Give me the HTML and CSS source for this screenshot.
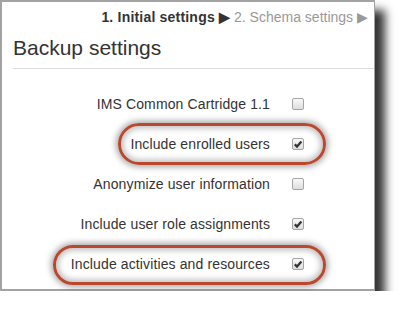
FILE: index.html
```html
<!DOCTYPE html>
<html lang="en">
<head>
    <meta charset="UTF-8">
    <meta name="viewport" content="width=device-width, initial-scale=1.0">
    <title>Backup settings</title>
    <link rel="stylesheet" href="styles.css">
</head>
<body>
    <div class="panel">
        <div class="steps">
            <span class="step-current">1. Initial settings &#9654;</span>
            <span class="step-next">2. Schema settings &#9654;</span>
        </div>
        <h2>Backup settings</h2>
        <hr>

        <div class="rows">
            <div class="row">
                <span class="label">IMS Common Cartridge 1.1</span>
                <span class="box"></span>
            </div>
            <div class="row mark-short">
                <span class="label">Include enrolled users</span>
                <span class="box checked"><svg viewBox="0 0 10 10"><path d="M1.8 5.4 L4 7.6 L8.4 2.6" /></svg></span>
            </div>
            <div class="row">
                <span class="label">Anonymize user information</span>
                <span class="box"></span>
            </div>
            <div class="row">
                <span class="label">Include user role assignments</span>
                <span class="box checked"><svg viewBox="0 0 10 10"><path d="M1.8 5.4 L4 7.6 L8.4 2.6" /></svg></span>
            </div>
            <div class="row mark-long">
                <span class="label">Include activities and resources</span>
                <span class="box checked"><svg viewBox="0 0 10 10"><path d="M1.8 5.4 L4 7.6 L8.4 2.6" /></svg></span>
            </div>
        </div>
    </div>
</body>
</html>
```

FILE: styles.css
```css
body {
    margin: 0;
    background: white;
    font-family: "Liberation Sans", Arial, sans-serif;
    color: #333;
}
.panel {
    box-sizing: border-box;
    width: 375px;
    height: 291px;
    padding: 5px 11px 0 11px;
    background: white;
    border: 2px solid #a3a3a3;
    border-right-width: 1px;
    box-shadow: 10px 10px 9px rgba(0,0,0,0.8);
}
.steps {
    text-align: right;
    font-size: 14px;
    line-height: 20px;
    margin-right: -5px;
}
.step-current {
    font-weight: bold;
    color: #333;
    letter-spacing: 0.2px;
}
.step-next {
    color: #999;
}
h2 {
    margin: 7px 0 0 0;
    font-size: 21px;
    font-weight: normal;
    line-height: 28px;
    color: #333;
}
hr {
    margin: 6px -11px 0 0;
    border: none;
    border-top: 1px solid #ddd;
}
.rows {
    margin-top: 15px;
}
.row {
    position: relative;
    display: flex;
    align-items: center;
    height: 40px;
    font-size: 14px;
}
.label {
    width: 257px;
    text-align: right;
    letter-spacing: 0.12px;
}
.box {
    position: relative;
    box-sizing: border-box;
    width: 12px;
    height: 12px;
    margin-left: 22px;
    border: 1px solid #a5a5a5;
    border-radius: 2px;
    background: linear-gradient(#f8f8f8, #dedede);
}
.box svg {
    position: absolute;
    left: 0;
    top: 0;
    width: 10px;
    height: 10px;
}
.box path {
    fill: none;
    stroke: #333;
    stroke-width: 2.2;
}
.mark-short::before,
.mark-long::before {
    content: "";
    position: absolute;
    box-sizing: border-box;
    border: 3.5px solid #b9482f;
    border-radius: 22px;
    box-shadow: 0 0 6px 2px rgba(0,0,0,0.35), inset 0 0 6px 2px rgba(0,0,0,0.28);
}
.mark-short::before {
    left: 105px;
    top: -1px;
    width: 208px;
    height: 42px;
}
.mark-long::before {
    left: 40px;
    top: 1px;
    width: 273px;
    height: 40px;
}
```
